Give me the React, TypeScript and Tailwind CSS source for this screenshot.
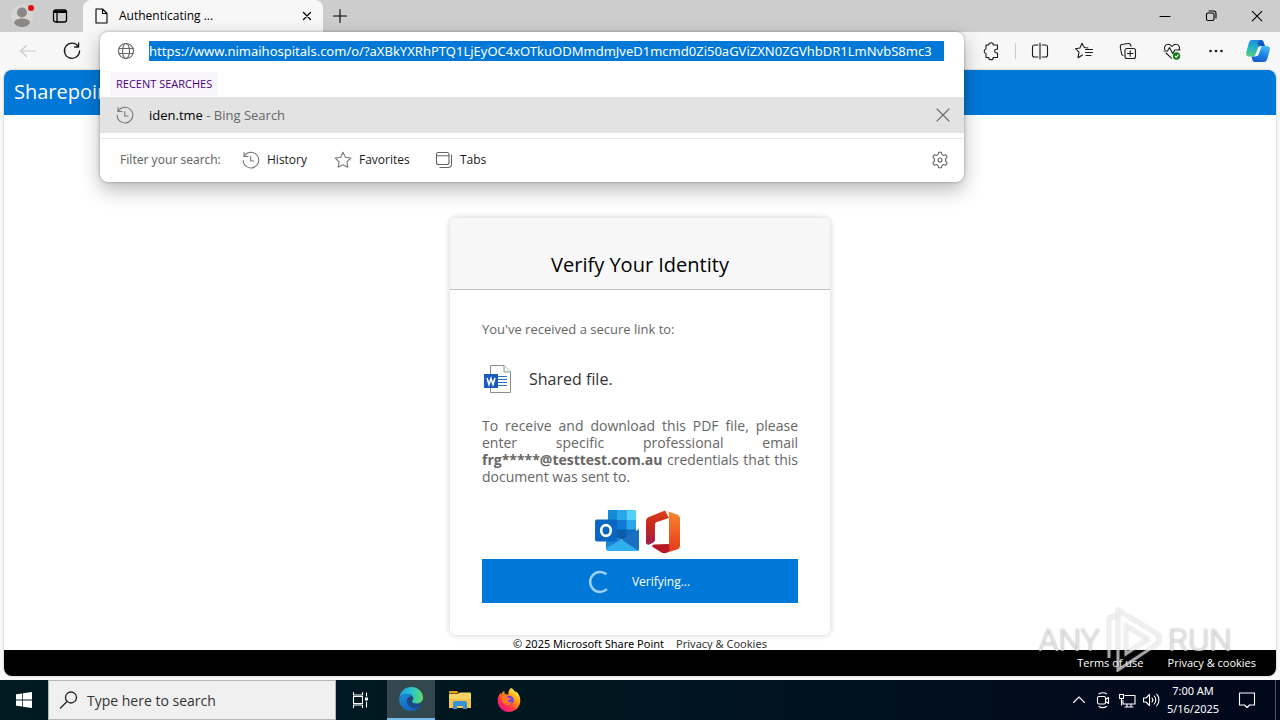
import type { ReactNode } from "react";

type IconProps = { children: ReactNode; className?: string; box?: number };

function Icon({ children, className = "size-5", box = 20 }: IconProps) {
  return (
    <svg
      viewBox={`0 0 ${box} ${box}`}
      className={`shrink-0 ${className}`}
      fill="none"
      stroke="currentColor"
      strokeWidth="1.1"
      strokeLinecap="round"
      strokeLinejoin="round"
      aria-hidden="true"
    >
      {children}
    </svg>
  );
}

function HistoryIcon({ className }: { className?: string }) {
  return (
    <Icon className={className}>
      <path d="M3 2.5V6.5H7" />
      <path d="M3.2 6.3A7.8 7.8 0 1 1 2.2 10.4" />
      <path d="M9.7 6.5V11H13" />
    </Icon>
  );
}

function TabStrip() {
  return (
    <header className="flex h-8 shrink-0 items-stretch bg-[#cdcdcd] text-black">
      <button aria-label="Profile" className="relative flex w-11 items-center justify-center">
        <svg viewBox="0 0 24 24" className="size-6" aria-hidden="true">
          <circle cx="12" cy="12" r="11" fill="#d8d5d3" />
          <circle cx="12" cy="8.5" r="5" fill="#8a8886" />
          <path d="M4 19c0-3 3.5-4.5 8-4.5s8 1.500 8 4.500c-1.500 2.500-4.500 4-8 4s-6.500-1.500-8-4z" fill="#8a8886" />
        </svg>
        <span className="absolute top-[5px] right-2.5 size-1.5 rounded-full bg-[#e00b1c]" />
      </button>
      <button aria-label="Tab actions" className="flex w-8 items-center justify-center">
        <Icon className="size-4" box={16}>
          <rect x="1.500" y="2" width="13" height="12" rx="2" strokeWidth="1.300" />
          <path d="M2.500 3.700H13.500" strokeWidth="2.600" />
          <path d="M5 5V14" strokeWidth="1.300" />
        </Icon>
      </button>
      <div className="ml-[7px] flex w-60 items-center rounded-t-lg bg-[#f7f7f7] pr-2 pl-2.5">
        <Icon className="size-4" box={16}>
          <path d="M3 1h6.500L14 5.500V15H3z M9.500 1v4.500H14" />
        </Icon>
        <span className="ml-2.5 flex-1 text-xs">Authenticating ...</span>
        <button aria-label="Close tab" className="flex size-4 items-center justify-center">
          <Icon className="size-4" box={16}>
            <path d="M4.500 4.500l7 7M11.500 4.500l-7 7" strokeWidth="1.300" />
          </Icon>
        </button>
      </div>
      <button aria-label="New tab" className="flex w-[34px] items-center justify-center">
        <Icon className="size-4" box={16}>
          <path d="M8 1.500v13M1.500 8h13" />
        </Icon>
      </button>
      <div className="ml-auto flex">
        <button aria-label="Minimize" className="flex w-[46px] items-center justify-center">
          <Icon className="size-3" box={12}>
            <path d="M1 6.500h10" />
          </Icon>
        </button>
        <button aria-label="Restore" className="flex w-[46px] items-center justify-center">
          <Icon className="size-3" box={12}>
            <rect x="1.500" y="3" width="7.500" height="7.500" rx="1.500" />
            <path d="M4 1h4.500A2.500 2.500 0 0 1 11 3.500V8" />
          </Icon>
        </button>
        <button aria-label="Close window" className="flex w-[46px] items-center justify-center">
          <Icon className="size-3" box={12}>
            <path d="M1.300 1.300l9.500 9.500M10.800 1.300l-9.500 9.500" />
          </Icon>
        </button>
      </div>
    </header>
  );
}

function AddressPopup() {
  return (
    <div className="absolute inset-x-0 top-0 z-20 overflow-hidden rounded-lg bg-white shadow-[0_8px_20px_rgba(0,0,0,0.28),0_0_3px_rgba(0,0,0,0.35)]">
      <div className="flex h-[38px] items-center pr-5 pl-4">
        <Icon className="size-5 text-[#666]">
          <circle cx="10" cy="10" r="7.500" />
          <ellipse cx="10" cy="10" rx="3.500" ry="7.500" />
          <path d="M3 7.500h14M3 12.500h14" />
        </Icon>
        <input
          aria-label="Address"
          readOnly
          className="ml-[13px] h-5 min-w-0 flex-1 bg-[#0078d7] font-['Noto_Sans',sans-serif] text-[13px] leading-5 text-white outline-none"
          value="https://www.nimaihospitals.com/o/?aXBkYXRhPTQ1LjEyOC4xOTkuODMmdmJveD1mcmd0Zi50aGViZXN0ZGVhbDR1LmNvbS8mc3"
        />
      </div>
      <div className="flex h-[27px] items-center pl-2.5">
        <h2 className="bg-[#f8f6fa] px-1.5 text-[11px] leading-6 text-[#4b0082]">RECENT SEARCHES</h2>
      </div>
      <div className="flex h-9 items-center bg-[#e3e3e3] pr-3 pl-[15px]">
        <HistoryIcon className="size-5 text-[#777]" />
        <a href="#search" className="ml-3.5 flex-1 pt-px text-[13px] text-[#666]">
          <span className="text-black">iden.tme</span> - Bing Search
        </a>
        <button aria-label="Remove suggestion" className="text-[#6b6b6b]">
          <Icon className="size-[18px]" box={18}>
            <path d="M3 3l12 12M15 3L3 15" />
          </Icon>
        </button>
      </div>
      <div className="mt-[5px] flex h-11 items-center border-t border-[#e8e8e8] pr-3.5 pb-0.5 pl-5 text-xs">
        <span className="w-[121px] font-['Noto_Sans',sans-serif] text-[#666]">Filter your search:</span>
        <button className="flex w-[92px] items-center gap-1.5">
          <HistoryIcon className="size-5 text-[#777]" />
          History
        </button>
        <button className="flex w-[101px] items-center gap-1.5">
          <Icon className="size-5 text-[#777]">
            <path d="M10 2.300l2.400 4.900 5.400.8-3.900 3.800.9 5.400L10 14.700l-4.800 2.500.9-5.400L2.200 8l5.400-.8z" />
          </Icon>
          Favorites
        </button>
        <button className="flex items-center gap-1.5">
          <Icon className="size-5 text-[#666]">
            <rect x="2.500" y="2.500" width="12.500" height="12" rx="2" />
            <path d="M2.500 5.800H15M17.500 5v9a3.500 3.500 0 0 1-3.500 3.500H6" />
          </Icon>
          Tabs
        </button>
        <button aria-label="Search settings" className="ml-auto text-[#666]">
          <Icon className="size-5">
            <circle cx="10" cy="10" r="2" />
            <path d="M8.600 2.300h2.800l.6 2.300 1.500.9 2.300-.7 1.400 2.400-1.700 1.700v2.200l1.700 1.700-1.400 2.400-2.300-.7-1.500.9-.6 2.300H8.600L8 15.400l-1.500-.9-2.300.7-1.400-2.400 1.700-1.700V8.900L2.800 7.200l1.400-2.400 2.300.7L8 4.600z" />
          </Icon>
        </button>
      </div>
    </div>
  );
}

function ToolButton({ label, children }: { label: string; children: ReactNode }) {
  return (
    <button aria-label={label} className="flex w-11 items-center justify-center">
      <Icon>{children}</Icon>
    </button>
  );
}

function Toolbar() {
  return (
    <nav className="flex h-[38px] shrink-0 bg-[#f7f7f7] text-[#1b1b1b]">
      <div className="flex w-[100px] pl-1.5">
        <button aria-label="Back" className="flex w-11 items-center justify-center text-[#c8c8c8]">
          <Icon>
            <path d="M17.500 10H2.500M8.500 4.500L2.500 10l6 5.500" />
          </Icon>
        </button>
        <ToolButton label="Refresh">
          <path d="M16.300 5.500A7.600 7.600 0 1 0 17.600 10M16.600 2v4h-4" strokeWidth="1.300" />
        </ToolButton>
      </div>
      <div className="relative flex-1">
        <AddressPopup />
      </div>
      <div className="flex pr-0.5 pl-[5px]">
        <ToolButton label="Extensions">
          <path d="M5 4h2.700a2.300 2.300 0 0 1 4.600 0H16.500v4.200h-1a1.900 1.900 0 0 0 0 3.800h1V16.500h-4.200a2.300 2.300 0 0 1-4.600 0H5v-4a2.300 2.300 0 0 1 0-4.500z" />
        </ToolButton>
        <span className="mr-0.5 ml-0.5 h-4 w-px self-center bg-[#ccc]" />
        <ToolButton label="Split screen">
          <path d="M8 4H4.500a2 2 0 0 0-2 2v8a2 2 0 0 0 2 2H8M12 4h3.500a2 2 0 0 1 2 2v8a2 2 0 0 1-2 2H12M10 2v16" />
        </ToolButton>
        <ToolButton label="Favorites">
          <path d="M14 7l-3.700-.5L8 2.300 5.900 7 1.500 7.700l3.500 3.500-1 5.500L8.500 14M11.500 8.500h7M11.500 11.500h7M12 14.500h5" />
        </ToolButton>
        <ToolButton label="Collections">
          <rect x="7" y="7.500" width="10.500" height="10" rx="2" />
          <path d="M12.200 9.800v5.500M9.500 12.500H15M5 14.500a2.500 2.500 0 0 1-1.500-2L2.300 6a2.200 2.200 0 0 1 1.800-2.500l6-1A2.200 2.200 0 0 1 12.600 4l.3 1.200" />
        </ToolButton>
        <ToolButton label="Browser essentials">
          <path d="M2.800 8.500c-1-2.500.7-5.200 3.200-5.200 1.800 0 3 1 4 2.200 1-1.200 2.200-2.200 4-2.200 2.500 0 4.200 2.700 3.200 5.200M4 12l5.500 5.200M2 10h3.500l2-3.500 3.200 6 2-3.500H18" />
          <circle cx="14.500" cy="15" r="3.700" fill="#107c10" stroke="none" />
          <path d="M13 15.200l1.100 1.100 2.100-2.400" stroke="#fff" />
        </ToolButton>
        <ToolButton label="Settings and more">
          <g fill="currentColor" stroke="none">
            <circle cx="4.500" cy="10" r="1.300" />
            <circle cx="10" cy="10" r="1.300" />
            <circle cx="15.500" cy="10" r="1.300" />
          </g>
        </ToolButton>
        <button aria-label="Copilot" className="flex w-10 items-center justify-center">
          <svg viewBox="0 0 24 24" className="size-6" aria-hidden="true">
            <defs>
              <linearGradient id="copLeft" x1="0.500" y1="0" x2="0.300" y2="1">
                <stop offset="0" stopColor="#1b8be0" />
                <stop offset="0.500" stopColor="#24b6c4" />
                <stop offset="1" stopColor="#55cf83" />
              </linearGradient>
              <linearGradient id="copRight" x1="0.600" y1="0" x2="0.300" y2="1">
                <stop offset="0" stopColor="#42b8f2" />
                <stop offset="0.500" stopColor="#1c84e8" />
                <stop offset="1" stopColor="#1659cf" />
              </linearGradient>
            </defs>
            <path d="M6 1h9c2 0 2.500 1.500 3 3.500L19 7h-3c-2 0-3 1-3.500 3l-1.500 5c-.6 2-1.500 2.500-3 2.500H3C.5 17.500-.3 15.500.3 13L2.800 4C3.400 2 4.300 1 6 1z" fill="url(#copLeft)" />
            <path d="M14 1.100c2.500 0 3.200 1 4 3.400l.8 2.500h-3.300l-2.500 1L11.500 4z" fill="#1457c2" />
            <path d="M18 23H9c-2 0-2.500-1.500-3-3.500l-.6-2h2.800c2 0 2.700-1 3.300-3L13 9.500c.6-2 1.500-2.500 3-2.500h5c2.500 0 3.300 2 2.700 4.500L21.200 20c-.6 2-1.500 3-3.200 3z" fill="url(#copRight)" />
            <path d="M12.700 7.500l3-.5-3.500 9.500-3.500 1z" fill="#fff" />
          </svg>
        </button>
      </div>
    </nav>
  );
}

function WordIcon() {
  return (
    <svg viewBox="0 0 30 30" className="size-[30px] shrink-0" aria-hidden="true">
      <path d="M8.500 1.500H22l6.500 6.500v20.500h-20z" fill="#fff" stroke="#8a8f8d" />
      <path d="M22 1.500V8h6.500" fill="#eef5ee" stroke="#7fa383" />
      <path d="M16 12.500h9M16 15.500h9M16 18.500h9M16 21.500h9" stroke="#2b72c4" />
      <rect x="2" y="10" width="14" height="14" fill="#185abd" />
      <path d="M5 14l2 6.500 2-6 2 6 2-6.500" fill="none" stroke="#fff" strokeWidth="1.600" />
    </svg>
  );
}

function OutlookIcon() {
  return (
    <svg viewBox="0 0 44 42" className="h-[42px] w-11" aria-hidden="true">
      <path d="M13 2a2 2 0 0 1 2-2h24a2 2 0 0 1 2 2v25H13z" fill="#0f6cbd" />
      <path d="M22 0h9.500v10H22z" fill="#28a8ea" />
      <path d="M31.500 0H39a2 2 0 0 1 2 2v8h-9.500z" fill="#50d0fb" />
      <path d="M13 0h9v10h-9z" fill="#1688d8" />
      <path d="M22 10h9.500v9.500H22z" fill="#0f78d4" />
      <path d="M31.500 10H41v9.500h-9.500z" fill="#28a8ea" />
      <path d="M22 19.500h9.500V29H22z" fill="#0b5cab" />
      <path d="M11 22l16 8-16 9z" fill="#1b86d6" />
      <path d="M44 19v20c0 1-.8 2-1.800 2L26 30z" fill="#1a6fc0" />
      <path d="M11 38l16-8 16 10.500-1 .5H13a2 2 0 0 1-2-2z" fill="#2eb0ee" />
      <rect x="0" y="9.500" width="22" height="22" rx="2" fill="#0a67c1" />
      <ellipse cx="11" cy="20.500" rx="4.800" ry="5.400" fill="none" stroke="#fff" strokeWidth="2.600" />
    </svg>
  );
}

function OfficeIcon() {
  return (
    <svg viewBox="0 0 36 44" className="h-11 w-9" aria-hidden="true">
      <defs>
        <linearGradient id="offLeft" x1="0.500" y1="0" x2="0.300" y2="1">
          <stop offset="0" stopColor="#d83b1c" />
          <stop offset="0.500" stopColor="#c8281c" />
          <stop offset="1" stopColor="#a31c4a" />
        </linearGradient>
        <linearGradient id="offRight" x1="0.500" y1="0" x2="0.500" y2="1">
          <stop offset="0" stopColor="#f58a2c" />
          <stop offset="0.600" stopColor="#ee5524" />
          <stop offset="1" stopColor="#e23a18" />
        </linearGradient>
      </defs>
      <path d="M20 .5L4 7C1.500 8 1 9.500 1 12v20c0 2.500 2 3.500 4.500 2l3-1.700c1-.6 1.500-1.500 1.500-3V14.500c0-1.500.5-2 2-2.600L24 8z" fill="url(#offLeft)" />
      <path d="M20 .5l12 4C34.500 5.500 35 7 35 9v26c0 2-.5 3.500-3 4.500L19 43.500c2-1 5-2 5-5V4.500C24 2 22 .5 20 .5z" fill="url(#offRight)" />
      <path d="M24 34l-15 .5c-2 .2-2.500 2-.5 3l8 5c2.500 1.300 5 .5 6.500-.5s1.500-3 1-8z" fill="#b81725" />
    </svg>
  );
}

function VerifyCard() {
  return (
    <section className="w-[380px] overflow-hidden rounded-md bg-white shadow-[0_0_6px_rgba(0,0,0,0.2)]">
      <div className="flex h-[72px] items-end justify-center border-b border-[#c4c4c4] bg-[#f7f7f7] pb-2.5">
        <h1 className="text-xl leading-7 text-black">Verify Your Identity</h1>
      </div>
      <div className="px-8 pt-[29px] pb-8 text-[#666]">
        <p className="text-[13px] leading-5">You've received a secure link to:</p>
        <div className="mt-6 flex h-8 items-center gap-[17px] text-base text-[#333]">
          <WordIcon />
          Shared file.
        </div>
        <p className="mt-[22px] text-justify text-sm leading-[17px]">
          To receive and download this PDF file, please enter specific professional email{" "}
          <b>frg*****@testtest.com.au</b> credentials that this document was sent to.
        </p>
        <div className="mt-[25px] flex h-[49px] items-start justify-center gap-1.5 pr-1">
          <OutlookIcon />
          <OfficeIcon />
        </div>
        <button className="flex h-11 w-full items-center justify-center gap-5 bg-[#0078d7] pt-0.5 pr-0.5 text-xs text-white">
          <svg viewBox="0 0 24 24" className="size-6" fill="none" stroke="#9fd0f5" strokeWidth="2.500" aria-hidden="true">
            <path d="M18.500 4.200A10 10 0 1 0 19 19.200" />
          </svg>
          Verifying...
        </button>
      </div>
    </section>
  );
}

function Watermark() {
  return (
    <div
      aria-hidden="true"
      className="pointer-events-none absolute right-11 bottom-1 flex h-16 items-center gap-1.5 font-['Roboto','Liberation_Sans',sans-serif] text-[32px] leading-none font-light text-white/60 [text-shadow:0_0_2px_rgba(110,110,110,0.7)]"
    >
      <span>ANY</span>
      <svg viewBox="0 0 56 64" className="h-16 w-14 drop-shadow-[0_0_1px_rgba(110,110,110,0.6)]" fill="none" stroke="#fff" strokeOpacity="0.600" strokeWidth="3">
        <path d="M10 8L3 10v40" />
        <path d="M12 52V2L53 27v8L12 62z" />
        <path d="M20 18v28l22-15z" />
      </svg>
      <span>RUN</span>
    </div>
  );
}

function Page() {
  return (
    <main className="relative mx-1 mb-1 flex flex-1 flex-col overflow-hidden rounded-lg bg-white shadow-[0_0_2px_rgba(0,0,0,0.3)]">
      <div className="flex h-[45px] shrink-0 items-center bg-[#0078d7] px-2.5 pb-0.5 text-xl text-white">Sharepoint</div>
      <div className="flex flex-1 flex-col items-center justify-end">
        <VerifyCard />
        <div className="flex h-[15px] items-center gap-3 pt-0.5 font-['Noto_Sans',sans-serif] text-[11px] leading-none text-black">
          <span>© 2025 Microsoft Share Point</span>
          <a href="#privacy" className="text-[#333]">Privacy &amp; Cookies</a>
        </div>
      </div>
      <footer className="flex h-[26px] shrink-0 items-center justify-end gap-6 bg-black pr-5 text-[11px] text-white">
        <a href="#terms">Terms of use</a>
        <a href="#privacy-policy">Privacy &amp; cookies</a>
      </footer>
      <Watermark />
    </main>
  );
}

function Taskbar() {
  return (
    <footer className="flex h-10 shrink-0 bg-gradient-to-r from-[#001a22] via-[#001620] to-[#02071c] text-white">
      <button aria-label="Start" className="flex w-12 items-center justify-center">
        <svg viewBox="0 0 16 16" className="size-4" fill="#fff" aria-hidden="true">
          <path d="M0 2.300l6.300-.9v6.200H0zM7 1.300L16 0v7.600H7zM0 8.400h6.300v6.200L0 13.700zM7 8.400h9V16l-9-1.300z" />
        </svg>
      </button>
      <label className="flex w-72 items-center gap-2 border border-[#b5b5b5] bg-[#f0f0f0] pl-2.5 text-[#222]">
        <Icon className="size-5">
          <circle cx="12" cy="7.500" r="5.500" strokeWidth="1.300" />
          <path d="M8 11.500L1.500 18" strokeWidth="1.300" />
        </Icon>
        <input
          aria-label="Search"
          placeholder="Type here to search"
          className="min-w-0 flex-1 bg-transparent pt-0.5 text-sm outline-none placeholder:text-[#333]"
        />
      </label>
      <button aria-label="Task view" className="flex w-[51px] items-center justify-center pr-1">
        <Icon className="size-[18px]" box={18}>
          <path d="M2.500 1.500v2.500h9V1.500M2.500 16.500V14h9v2.500M2.500 5.500h9v7h-9zM15.500 2v3M15.500 11v5" />
          <path d="M14 6.500h3v3h-3z" fill="#fff" stroke="none" />
        </Icon>
      </button>
      <button aria-label="Edge" className="flex w-12 items-center justify-center border-b-2 border-[#76b9ed] bg-[#33474f]">
        <svg viewBox="0 0 24 24" className="size-6" aria-hidden="true">
          <defs>
            <linearGradient id="edgeTop" x1="0" y1="0.500" x2="1" y2="0.500">
              <stop offset="0" stopColor="#1ba0e0" />
              <stop offset="0.550" stopColor="#2bc4cf" />
              <stop offset="1" stopColor="#64dd61" />
            </linearGradient>
            <linearGradient id="edgeLow" x1="0" y1="0" x2="1" y2="1">
              <stop offset="0" stopColor="#1b8fe0" />
              <stop offset="1" stopColor="#0f54a5" />
            </linearGradient>
          </defs>
          <path d="M.2 11C1 4.500 6 0 12.200 0 19 0 24 5 24 10.500c0 4-3 6-6.500 6-2.800 0-4.500-1-4.500-2 0-.7 1.300-1.200 1.300-3 0-2.500-2.500-4.500-5.800-4.500C4.500 7 1 9 .2 11z" fill="url(#edgeTop)" />
          <path d="M.2 11C1.500 8.300 4.800 7 8.500 7c2.400 0 4.200 1 5.100 2.300C9.500 9.300 7.800 12 8 14.500c.3 4 4.500 6.500 8.500 6.200 2.500-.2 4.500-1 5.500-1.700C20 22 16.500 24 12 24 5.500 24-.5 18.500.2 11z" fill="url(#edgeLow)" />
          <path d="M8 14.500c-.2-2.500 1.500-5 4.600-5.200-1.500 1.500-1.400 4 0 5.700 1.700 2 5.500 3 9.400 1.500.6.200.8 1 .3 1.800-1.300 1.700-3.300 2.400-5.800 2.400-4 .2-8.200-2.200-8.500-6.200z" fill="#174a8a" />
        </svg>
      </button>
      <button aria-label="File Explorer" className="flex w-[50px] items-center justify-center">
        <svg viewBox="0 0 22 20" className="h-5 w-[22px]" aria-hidden="true">
          <path d="M0 2a1 1 0 0 1 1-1h7l2 2.500H0z" fill="#e8a417" />
          <path d="M0 4l9 0 2-1.500h10a1 1 0 0 1 1 1V18H0z" fill="#fbd468" />
          <path d="M0 9h22v9H0z" fill="#f6c449" />
          <path d="M4 19v-6a2 2 0 0 1 2-2h10a2 2 0 0 1 2 2v6h-4v-3H8v3z" fill="#3a91d3" />
        </svg>
      </button>
      <button aria-label="Firefox" className="flex w-12 items-center justify-center">
        <svg viewBox="0 0 24 24" className="size-6" aria-hidden="true">
          <defs>
            <linearGradient id="foxBody" x1="0.850" y1="0.100" x2="0.200" y2="0.950">
              <stop offset="0" stopColor="#fff44f" />
              <stop offset="0.350" stopColor="#ff980e" />
              <stop offset="0.700" stopColor="#ff3647" />
              <stop offset="1" stopColor="#e31587" />
            </linearGradient>
          </defs>
          <path d="M14 0c2 1 3.500 2.500 4.500 5 0-1 0-1.500-.2-2.200C21.500 5 23.300 8.500 23.300 12.500 23.300 19 18.300 24 12 24S.7 19 .7 12.700C.7 9.500 2 6.500 3.500 4.500c0 1 .1 1.700.4 2.300.8-1.600 2-3 3.600-4-.3 1.500 0 2.700.7 3.500 1.300-.3 2.500 0 3.300.5C11 4 12 1.500 14 0z" fill="url(#foxBody)" />
          <circle cx="12.500" cy="12" r="4.300" fill="#7542e5" />
          <path d="M5 8.500c2-1 4-.5 5.500 1 1 .8 3 .3 3 1.300S12 12 11 12.300c-.3 1.500 2 2.500 4 1.400-1 3-4 3.800-6.500 2.800S4.500 12.500 5 8.500z" fill="#ff7a22" />
        </svg>
      </button>
      <div className="ml-auto flex items-center">
        <button aria-label="Show hidden icons" className="flex w-6 justify-center">
          <Icon className="size-4" box={16}>
            <path d="M2.500 10.500L8 5l5.500 5.500" />
          </Icon>
        </button>
        <button aria-label="Meet now" className="flex w-6 justify-center">
          <Icon className="size-[18px]" box={18}>
            <rect x="3.500" y="5.500" width="8" height="7.500" rx="1.500" />
            <path d="M11.500 8.500l3-2v6l-3-2M5 2.800c2-1.500 5.500-1.500 7.500 0M5 15.500c2 1.500 5.500 1.500 7.500 0" />
          </Icon>
        </button>
        <button aria-label="Network" className="flex w-6 justify-center">
          <Icon className="size-[18px]" box={18}>
            <path d="M7 4.500h10V13H5V9.500M1.500 3.500h4v4h-4zM3.500 7.500V14M9 13v2.500M13 13v2.500M7 16h8" />
          </Icon>
        </button>
        <button aria-label="Volume" className="flex w-6 justify-center">
          <Icon className="size-[18px]" box={18}>
            <path d="M1.500 7v4h2.500l3.500 3.500v-11L4 7zM10 7c1 1.200 1 2.800 0 4M12.300 5c2 2.200 2 5.800 0 8M14.700 3.200c3 3.200 3 8.400 0 11.600" />
          </Icon>
        </button>
        <div className="flex w-15 flex-col items-center font-['Noto_Sans',sans-serif] text-[11px] leading-[18px]">
          <span>7:00 AM</span>
          <span>5/16/2025</span>
        </div>
        <button aria-label="Notifications" className="flex w-12 justify-center">
          <Icon className="size-[18px]" box={18}>
            <path d="M1.500 2h15v12h-5L9 16.500 6.500 14h-5z" />
          </Icon>
        </button>
        <span className="ml-1 h-10 w-px bg-[#4a5262]" />
        <span className="w-1" />
      </div>
    </footer>
  );
}

export default function App() {
  return (
    <div className="flex h-screen min-h-[720px] flex-col bg-[#f7f7f7] font-['Open_Sans','Noto_Sans',sans-serif] text-black">
      <TabStrip />
      <Toolbar />
      <Page />
      <Taskbar />
    </div>
  );
}
